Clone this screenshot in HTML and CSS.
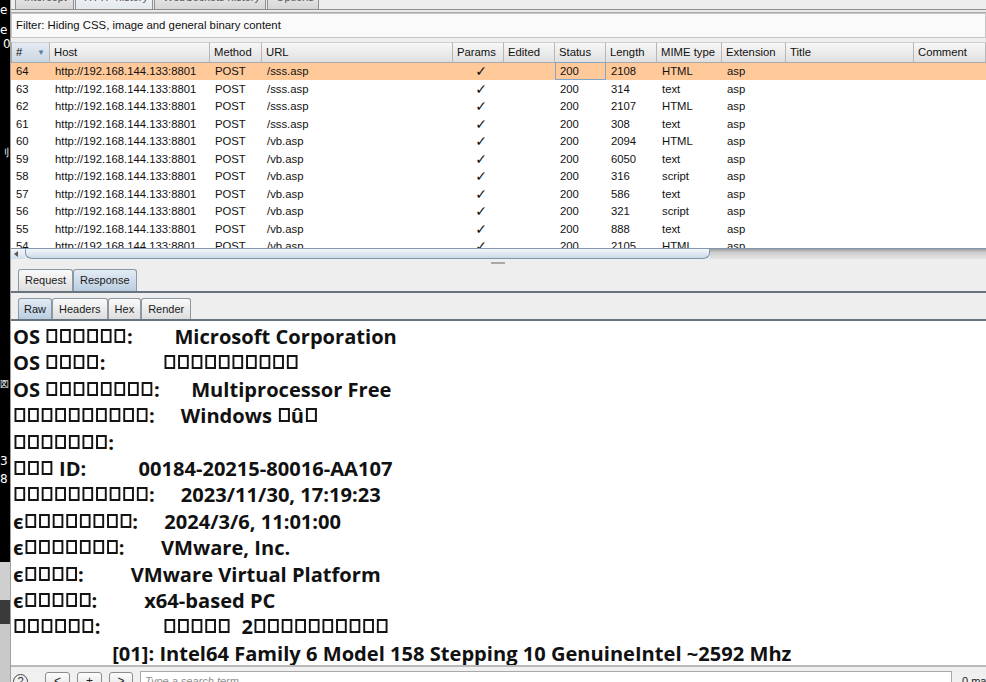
FILE: index.html
```html
<!DOCTYPE html>
<html lang="en">
<head>
<meta charset="utf-8">
<title>HTTP history</title>
<link rel="stylesheet" href="styles.css">
</head>
<body>
<div class="desk">
  <span class="dk d1">e</span>
  <span class="dk d2">e</span>
  <span class="dk d3">0</span>
  <span class="dk d4">刂</span>
  <span class="dk d5">図</span>
  <span class="dk d6">3</span>
  <span class="dk d7">8</span>
</div>
<div class="win">
  <div class="toptabs">
    <div class="ttab">Intercept</div>
    <div class="ttab on">HTTP history</div>
    <div class="ttab">WebSockets history</div>
    <div class="ttab">Options</div>
  </div>
  <div class="rule"></div>
  <div class="filter">Filter: Hiding CSS, image and general binary content</div>
  <div class="grid">
    <div class="thead">
      <span class="sorted">#<i class="arrow">▼</i></span><span>Host</span><span>Method</span><span>URL</span><span>Params</span><span>Edited</span><span>Status</span><span>Length</span><span>MIME type</span><span>Extension</span><span>Title</span><span>Comment</span>
    </div>
    <div class="row sel"><span>64</span><span>http://192.168.144.133:8801</span><span>POST</span><span>/sss.asp</span><span class="ck">✓</span><span></span><span class="foc">200</span><span>2108</span><span>HTML</span><span>asp</span><span></span><span></span></div>
    <div class="row"><span>63</span><span>http://192.168.144.133:8801</span><span>POST</span><span>/sss.asp</span><span class="ck">✓</span><span></span><span>200</span><span>314</span><span>text</span><span>asp</span><span></span><span></span></div>
    <div class="row"><span>62</span><span>http://192.168.144.133:8801</span><span>POST</span><span>/sss.asp</span><span class="ck">✓</span><span></span><span>200</span><span>2107</span><span>HTML</span><span>asp</span><span></span><span></span></div>
    <div class="row"><span>61</span><span>http://192.168.144.133:8801</span><span>POST</span><span>/sss.asp</span><span class="ck">✓</span><span></span><span>200</span><span>308</span><span>text</span><span>asp</span><span></span><span></span></div>
    <div class="row"><span>60</span><span>http://192.168.144.133:8801</span><span>POST</span><span>/vb.asp</span><span class="ck">✓</span><span></span><span>200</span><span>2094</span><span>HTML</span><span>asp</span><span></span><span></span></div>
    <div class="row"><span>59</span><span>http://192.168.144.133:8801</span><span>POST</span><span>/vb.asp</span><span class="ck">✓</span><span></span><span>200</span><span>6050</span><span>text</span><span>asp</span><span></span><span></span></div>
    <div class="row"><span>58</span><span>http://192.168.144.133:8801</span><span>POST</span><span>/vb.asp</span><span class="ck">✓</span><span></span><span>200</span><span>316</span><span>script</span><span>asp</span><span></span><span></span></div>
    <div class="row"><span>57</span><span>http://192.168.144.133:8801</span><span>POST</span><span>/vb.asp</span><span class="ck">✓</span><span></span><span>200</span><span>586</span><span>text</span><span>asp</span><span></span><span></span></div>
    <div class="row"><span>56</span><span>http://192.168.144.133:8801</span><span>POST</span><span>/vb.asp</span><span class="ck">✓</span><span></span><span>200</span><span>321</span><span>script</span><span>asp</span><span></span><span></span></div>
    <div class="row"><span>55</span><span>http://192.168.144.133:8801</span><span>POST</span><span>/vb.asp</span><span class="ck">✓</span><span></span><span>200</span><span>888</span><span>text</span><span>asp</span><span></span><span></span></div>
    <div class="row"><span>54</span><span>http://192.168.144.133:8801</span><span>POST</span><span>/vb.asp</span><span class="ck">✓</span><span></span><span>200</span><span>2105</span><span>HTML</span><span>asp</span><span></span><span></span></div>
  </div>
  <div class="hscroll">
    <div class="sbtn"><i class="larr"></i></div>
    <div class="thumb"></div>
    <div class="track"></div>
  </div>
  <div class="divider"><span class="grip"></span></div>
  <div class="tabs">
    <div class="tab">Request</div>
    <div class="tab on">Response</div>
  </div>
  <div class="tabs sub">
    <div class="tab on">Raw</div>
    <div class="tab">Headers</div>
    <div class="tab">Hex</div>
    <div class="tab">Render</div>
  </div>
  <div class="content">
    <div class="ln">OS <span class="tf">▯▯▯▯▯▯</span>:        Microsoft Corporation</div>
    <div class="ln">OS <span class="tf">▯▯▯▯</span>:           <span class="tf">▯▯▯▯▯▯▯▯▯▯</span></div>
    <div class="ln">OS <span class="tf">▯▯▯▯▯▯▯▯</span>:      Multiprocessor Free</div>
    <div class="ln"><span class="tf">▯▯▯▯▯▯▯▯▯▯</span>:     Windows <span class="tf">▯</span>û<span class="tf">▯</span></div>
    <div class="ln"><span class="tf">▯▯▯▯▯▯▯</span>:</div>
    <div class="ln"><span class="tf">▯▯▯</span> ID:          00184-20215-80016-AA107</div>
    <div class="ln"><span class="tf">▯▯▯▯▯▯▯▯▯▯</span>:     2023/11/30, 17:19:23</div>
    <div class="ln">ϵ<span class="tf">▯▯▯▯▯▯▯▯</span>:     2024/3/6, 11:01:00</div>
    <div class="ln">ϵ<span class="tf">▯▯▯▯▯▯▯</span>:       VMware, Inc.</div>
    <div class="ln">ϵ<span class="tf">▯▯▯▯</span>:         VMware Virtual Platform</div>
    <div class="ln">ϵ<span class="tf">▯▯▯▯▯</span>:         x64-based PC</div>
    <div class="ln"><span class="tf">▯▯▯▯▯▯</span>:            <span class="tf">▯▯▯▯▯</span>  2<span class="tf">▯▯▯▯▯▯▯▯▯▯</span></div>
    <div class="ln">                   [01]: Intel64 Family 6 Model 158 Stepping 10 GenuineIntel ~2592 Mhz</div>
  </div>
  <div class="bottom">
    <span class="help">?</span>
    <span class="btn b1">&lt;</span>
    <span class="btn">+</span>
    <span class="btn b3">&gt;</span>
    <span class="search">Type a search term</span>
    <span class="matches">0 matches</span>
  </div>
</div>
</body>
</html>
```

FILE: styles.css
```css
* { box-sizing: border-box; margin: 0; padding: 0; }
html, body { width: 986px; height: 682px; overflow: hidden; }
body {
  background: #000;
  display: flex;
  font-family: "Liberation Sans", Arial, sans-serif;
  font-size: 11px;
  color: #111;
}

/* desktop strip behind the window */
.desk {
  width: 10px;
  flex: none;
  position: relative;
  overflow: hidden;
  background: linear-gradient(#000 0 562px, #cfcfcf 562px 600px, #3a3a3a 600px 624px, #c9c9c9 624px);
  color: #fff;
  font-family: "DejaVu Sans", sans-serif;
  font-size: 12px;
}
.dk { position: absolute; left: 0; line-height: 14px; }
.d1 { top: 3px; }
.d2 { top: 23px; }
.d3 { top: 37px; left: 3px; }
.d4 { top: 146px; font-size: 10px; }
.d5 { top: 377px; font-size: 9px; }
.d6 { top: 454px; }
.d7 { top: 472px; }

.win {
  flex: 1;
  min-width: 0;
  display: flex;
  flex-direction: column;
  background: #eeeeee;
  border-left: 1px solid #a0a0a0;
}

/* cut-off main tabs */
.toptabs {
  height: 9px;
  flex: none;
  display: flex;
  align-items: flex-end;
  padding-left: 4px;
  overflow: hidden;
}
.ttab {
  flex: none;
  height: 22px;
  line-height: 18px;
  padding: 0 8px;
  border: 1px solid #8f8f8f;
  border-bottom: none;
  border-radius: 3px 3px 0 0;
  background: linear-gradient(#f2f2f2, #d6d6d6);
  color: #555;
  margin-right: 1px;
  white-space: nowrap;
}
.ttab:nth-child(1) { width: 59px; }
.ttab:nth-child(2) { width: 78px; }
.ttab:nth-child(3) { width: 112px; }
.ttab:nth-child(4) { width: 52px; }
.ttab.on { background: linear-gradient(#f7f9fb, #e4e9ee); }

.rule {
  height: 4px;
  flex: none;
  border-top: 1px solid #8e8e8e;
  border-bottom: 1px solid #a9a9a9;
  background: #e9e9e9;
}

.filter {
  height: 25px;
  flex: none;
  margin-bottom: 4px;
  border: 1px solid #c6c6c6;
  background: #fafafa;
  padding-left: 4px;
  line-height: 23px;
  font-size: 11.35px;
  color: #111;
}

/* table */
.grid {
  height: 206px;
  flex: none;
  overflow: hidden;
  background: #fff;
  font-size: 11.3px;
}
.thead, .row {
  display: grid;
  grid-template-columns: 39px 160px 52px 191px 51px 51px 51px 51px 65px 64px 128px 1fr;
}
.thead { height: 20px; }
.thead span {
  display: block;
  padding-left: 4px;
  line-height: 19px;
  border-right: 1px solid #b7b7b7;
  border-bottom: 1px solid #a9a9a9;
  border-top: 1px solid #d0d0d0;
  background: linear-gradient(#f7f7f7, #e0e0e0);
  white-space: nowrap;
  color: #111;
}
.thead span.sorted {
  position: relative;
  background: linear-gradient(#e4ebf2, #c9d6e2);
  border-left: 1px solid #a9a9a9;
}
.arrow {
  position: absolute;
  right: 4px;
  top: 0;
  font-style: normal;
  font-size: 8px;
  color: #5d7fa6;
}
.row { height: 17.55px; }
.row span {
  display: block;
  padding-left: 5px;
  line-height: 19px;
  white-space: nowrap;
  overflow: hidden;
}
.row.sel { background: #ffc999; }
.row span.ck {
  padding-left: 5px;
  text-align: center;
  font-family: "DejaVu Sans", sans-serif;
  font-weight: 700;
  font-size: 14px;
  line-height: 19px;
}
.row span.foc { box-shadow: inset 0 0 0 1px #86a6c9; }

/* horizontal scrollbar */
.hscroll {
  height: 11px;
  flex: none;
  display: flex;
  border-top: 1px solid #8297ad;
}
.sbtn {
  width: 14px;
  flex: none;
  background: linear-gradient(#f4f7fa, #d3dfea);
  display: flex;
  align-items: center;
  padding-left: 3px;
}
.larr {
  width: 0;
  height: 0;
  border-top: 3px solid transparent;
  border-bottom: 3px solid transparent;
  border-right: 4px solid #555;
}
.thumb {
  width: 685px;
  flex: none;
  border: 1px solid #7f95ac;
  border-top: none;
  border-radius: 0 0 7px 7px / 0 0 6px 6px;
  background: linear-gradient(#f3f7fa, #ccdae7);
}
.track {
  flex: 1;
  background: linear-gradient(#9d9d9d, #cdcdcd 35%, #e4e4e4);
}

.divider {
  height: 9px;
  flex: none;
  display: flex;
  justify-content: center;
  padding-top: 3px;
  padding-right: 2px;
}
.grip {
  width: 14px;
  height: 2px;
  background: #a9a9a9;
}

/* tab strips */
.tabs {
  flex: none;
  display: flex;
  padding: 1px 0 0 7px;
  border-bottom: 2px solid #67737e;
}
.tabs.sub { margin-top: 4px; }
.tab {
  flex: none;
  height: 22px;
  line-height: 21px;
  padding: 0 6px;
  border: 1px solid #8b97a3;
  border-bottom: none;
  border-radius: 3px 3px 0 0;
  background: linear-gradient(#fafafa, #dddddd);
  color: #1a1a1a;
  white-space: nowrap;
}
.tabs.sub .tab { height: 21px; line-height: 20px; padding: 0 6px; }
.tabs.sub .tab:first-child { padding: 0 5px; }
.tab.on { background: linear-gradient(#e3ecf4, #b9cde0); }

/* response body */
.content {
  flex: 1;
  min-height: 0;
  overflow: hidden;
  background: #fff;
  padding: 3px 0 0 2px;
  font-family: "Open Sans", "Noto Sans", sans-serif;
  font-weight: 700;
  font-size: 20.1px;
  line-height: 26.4px;
  color: #111;
}
.ln { white-space: pre; height: 26.4px; }

/* missing-glyph boxes of the garbled text */
.tf {
  display: inline-block;
  height: 14px;
  line-height: 14px;
  vertical-align: baseline;
  font-family: "DejaVu Sans Mono", monospace;
  font-weight: 400;
  font-size: 22.6px;
  color: transparent;
  background-image:
    linear-gradient(to right, transparent 11px, #fff 11px),
    linear-gradient(to right, #141414 2px, transparent 2px 9px, #141414 9px),
    linear-gradient(#141414 2px, transparent 2px 12px, #141414 12px);
  background-size: 13.6px 14px;
  background-position: 1.5px 0;
  background-repeat: repeat-x;
}

/* bottom search bar */
.bottom {
  height: 17px;
  flex: none;
  overflow: hidden;
  display: flex;
  align-items: flex-start;
  padding: 5px 0 0 2px;
  border-top: 2px solid #b9b9b9;
  background: #f0f0f0;
}
.bottom > span { flex: none; }
.help {
  width: 15px;
  height: 15px;
  margin-top: 2px;
  border: 1.5px solid #444;
  border-radius: 50%;
  text-align: center;
  font-size: 11px;
  line-height: 13px;
  color: #333;
}
.btn {
  width: 25px;
  height: 20px;
  margin-left: 7px;
  border: 1px solid #8c8c8c;
  border-radius: 3px;
  background: linear-gradient(#fdfdfd, #dedede);
  text-align: center;
  line-height: 17px;
  font-size: 12px;
  color: #222;
}
.btn.b1 { margin-left: 17px; }
.btn.b3 { width: 24px; }
.search {
  width: 812px;
  height: 20px;
  margin: -1px 0 0 7px;
  border: 1px solid #a9a9a9;
  background: #fff;
  padding-left: 4px;
  line-height: 18px;
  font-style: italic;
  color: #8d8d8d;
  white-space: nowrap;
}
.matches {
  margin-left: 10px;
  line-height: 18px;
  white-space: nowrap;
  color: #222;
}
```
